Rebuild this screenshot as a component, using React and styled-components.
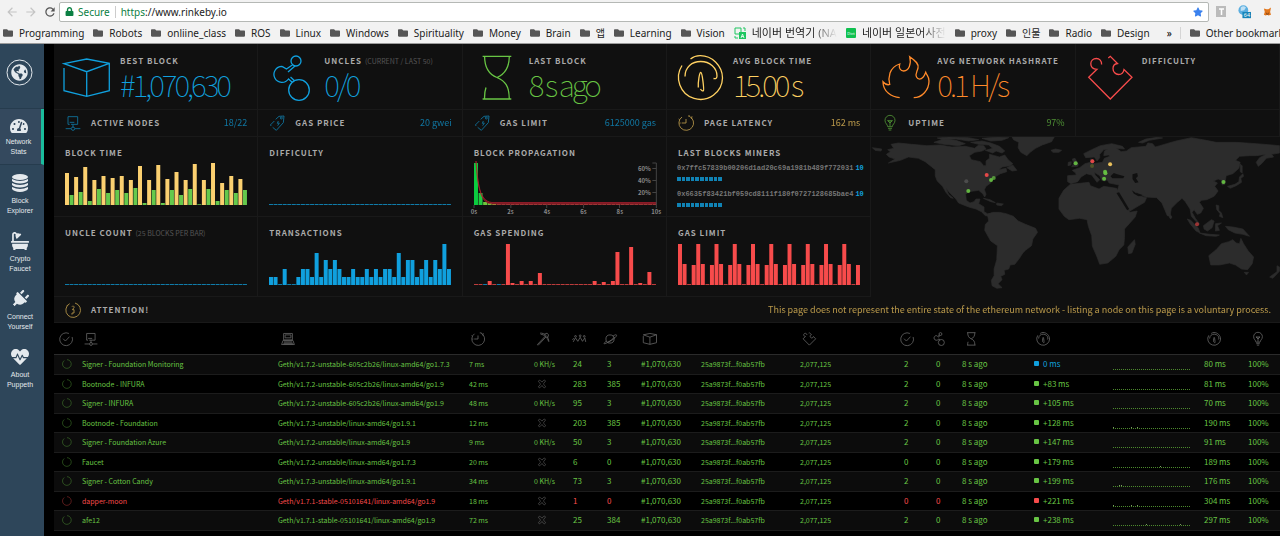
import React from 'react'
import styled, {createGlobalStyle} from 'styled-components'
import {FaBath, FaFolder, FaGlobeAmericas, FaHeartbeat, FaLock, FaPlug, FaStar, FaTachometerAlt} from 'react-icons/fa'
import {MdArrowBack, MdArrowForward, MdRefresh} from 'react-icons/md'

const c = {
	blue: '#10a0de',
	green: '#68c544',
	yellow: '#ffd162',
	orange: '#ff8a2a',
	red: '#f74b4b',
	gray: '#777',
	panel: '#101010',
	line: '#191919',
}

const GlobalStyle = createGlobalStyle`
	* { box-sizing: border-box; }
	body {
		margin: 0;
		background: #000;
		font-family: "Noto Sans CJK KR", "Noto Sans", sans-serif;
	}
	a { color: inherit; text-decoration: none; }
	button { padding: 0; border: 0; background: none; font: inherit; }
`

/* browser */

const Page = styled.div`
	display: flex;
	flex-direction: column;
	height: 100vh;
	overflow: hidden;
`

const Browser = styled.header`
	flex: none;
	background: #f2f2f2;
	border-bottom: 1px solid #9b9b9b;
	color: #1c1c1c;
	font-family: "Noto Sans", "Noto Sans CJK KR", sans-serif;
	font-size: 10px;
	line-height: 16px;
`

const Toolbar = styled.div`
	display: flex;
	align-items: center;
	height: 22px;
	padding: 1px 8px 0 2px;
`

const NavButton = styled.button`
	display: flex;
	justify-content: center;
	width: 19px;
	font-size: 14px;
	color: ${p => p.$on ? '#555' : '#c4c4c4'};
`

const Address = styled.label`
	display: flex;
	align-items: center;
	flex: 1;
	height: 20px;
	padding: 0 5px;
	border: 1px solid #b5b8b5;
	border-radius: 2px;
	background: #fff;
	color: #0b8043;
	svg { font-size: 9px; }
`

const Secure = styled.span`
	margin: 0 5px 0 4px;
	padding-right: 5px;
	border-right: 1px solid #ccc;
	line-height: 12px;
`

const UrlField = styled.input`
	flex: 1;
	min-width: 0;
	padding: 0;
	border: 0;
	outline: 0;
	background: none;
	color: #222;
	font: inherit;
`

const Extensions = styled.div`
	display: flex;
	align-items: center;
	gap: 12px;
	width: 63px;
	padding-left: 7px;
	flex: none;
`

const Bookmarks = styled.nav`
	display: flex;
	align-items: center;
	gap: 9px;
	height: 21px;
	padding-left: 3px;
	white-space: nowrap;
`

const Bookmark = styled.a`
	display: flex;
	align-items: center;
	flex: none;
	gap: 6px;
	svg { flex: none; font-size: 10px; color: #555; }
`

const Fade = styled.span`
	font-size: 11px;
	mask-image: linear-gradient(90deg, #000 70%, transparent);
`

const More = styled.button`
	margin-left: 8px;
	padding-right: 8px;
	border-right: 1px solid #d5d5d5;
	line-height: 12px;
`

/* sidebar */

const Body = styled.div`
	display: flex;
	flex: 1;
	min-height: 0;
	overflow: hidden;
`

const Sidebar = styled.nav`
	flex: none;
	width: 44px;
	background: #2e465a;
	color: #e4e9ed;
	font: 7px/10px "Liberation Sans", sans-serif;
	text-align: center;
`

const Brand = styled.a`
	display: flex;
	justify-content: center;
	height: 65px;
	padding: 15px 5px 0 0;
	border-bottom: 1px solid #263c4e;
`

const SideLink = styled.a`
	display: flex;
	flex-direction: column;
	align-items: center;
	gap: ${p => p.$active ? 2 : 4}px;
	height: ${p => p.$active ? 56 : 58}px;
	padding: ${p => p.$active ? 8 : 9}px 4px 0 0;
	border-right: ${p => p.$active ? '3px solid #1abc9c' : 0};
	border-bottom: ${p => p.$active ? '1px solid #263c4e' : 0};
	background: ${p => p.$active ? '#34495e' : 'none'};
	svg { flex: none; font-size: 18px; }
`

/* stats */

const Main = styled.main`
	flex: 1;
	min-width: 0;
	margin-left: 10px;
`

const Stats = styled.section`
	display: grid;
	grid-template-columns: repeat(6, 1fr);
	background: ${c.panel};
`

const Cell = styled.div`
	border-right: 1px solid ${c.line};
	border-bottom: 1px solid ${c.line};
	min-width: 0;
`

const BigStat = styled(Cell)`
	display: flex;
	gap: 9px;
	height: 66px;
	padding: 10px 0 0 9px;
	color: ${p => p.$color};
`

const SmallStat = styled(Cell)`
	display: flex;
	align-items: center;
	height: 27px;
	padding: 0 10px 0 11px;
	gap: 10px;
	color: ${p => p.$color};
`

const Title = styled.h2`
	margin: 0;
	color: #aaa;
	font-size: 8px;
	font-weight: 700;
	line-height: 14px;
	letter-spacing: 1px;
	text-transform: uppercase;
	white-space: nowrap;
`

const Hint = styled.small`
	color: #555;
	font-size: 7px;
	font-weight: 400;
	letter-spacing: 0;
`

const BigValue = styled.div`
	font-size: 30px;
	font-weight: 100;
	line-height: 32px;
	letter-spacing: -3px;
	white-space: nowrap;
`

const SmallValue = styled.span`
	margin-left: auto;
	font-size: 9px;
	font-weight: 400;
	line-height: 16px;
	opacity: .7;
	white-space: nowrap;
`

const ChartCell = styled(Cell)`
	height: 80px;
	padding: 9px 10px 0 11px;
`

const MapCell = styled.div`
	grid-area: 3 / 5 / 5 / 7;
	min-width: 0;
	overflow: hidden;
`

const Attention = styled.section`
	display: flex;
	align-items: center;
	gap: 10px;
	height: 26px;
	padding: 0 9px 0 11px;
	border-bottom: 1px solid ${c.line};
	background: ${c.panel};
	color: ${c.yellow};
`

const Thin = styled.svg`
	flex: none;
	width: ${p => p.$size}px;
	height: ${p => p.$size}px;
	overflow: visible;
	fill: none;
	stroke: currentColor;
	stroke-width: ${p => p.$size > 20 ? 1.3 : 2.8};
	opacity: ${p => p.$dim ? .65 : 1};
`

const Plot = styled.svg`
	display: block;
	width: 100%;
	height: ${p => p.$h}px;
	margin-top: ${p => p.$top || 0}px;
	overflow: visible;
`

const Miner = styled.div`
	margin: 4px 0 9px -1px;
	color: #777;
	font: bold 7px/9px "Liberation Mono", monospace;
	white-space: nowrap;
	b { margin-left: 2px; color: ${c.blue}; }
`

const Blocks = styled.div`
	display: flex;
	gap: 1px;
	width: 45px;
	margin-top: 4px;
	i { flex: 1; height: 4px; background: ${c.blue}; opacity: .8; }
`

/* nodes table */

const Nodes = styled.table`
	width: 100%;
	table-layout: fixed;
	border-collapse: collapse;
	color: ${c.green};
	font-size: 8px;
	line-height: 14px;
	text-align: left;
	white-space: nowrap;
`

const HeadCell = styled.th`
	height: 31px;
	padding: 2px 0 0 ${p => p.$pad}px;
	border-bottom: 1px solid #2b2b2b;
	color: #999;
	svg { display: block; }
`

const Row = styled.tr`
	height: 20px;
	background: #0c0c0c;
	&:nth-child(even) { height: 19px; background: #000; }
	td {
		padding: 0 0 0 4px;
		border-bottom: 1px solid #1c1c1c;
		color: ${p => p.$down ? c.red : c.green};
	}
	td svg { display: block; }
`

const State = styled.td`
	&&& { padding-left: 8px; }
	opacity: .6;
`

const Data = styled.td`
	&&& { color: ${p => p.$color || c.green}; }
	font-size: ${p => p.$small ? 7 : 8}px;
`

const Label = styled.td`
	font-size: 7px;
`

const Off = styled.span`
	display: block;
	padding-left: 3px;
`

const Square = styled.i`
	display: inline-block;
	width: 5px;
	height: 5px;
	margin-right: 4px;
	border-radius: 1px;
	background: ${p => p.$color};
	vertical-align: 1px;
`

const paths = {
	block: 'M1 14V36.7L23.7 42.3L46.3 36.7V9.3L23.7 5L1 9.7L23.7 17.7L46.3 9.3M23.7 17.7V42.3',
	uncles: 'M34 7A5 5 0 1 0 24 7A5 5 0 1 0 34 7M42.3 36A10.3 10.3 0 1 0 21.7 36A10.3 10.3 0 1 0 42.3 36M15 12.4A8 8 0 1 0 21.5 25L25.5 28.5M23.5 23L27.500 26.800M15 12.4L19.5 15L26 10.5M21 18L28 12',
	hourglass: 'M10.6 2.3H39.3M10.6 45H39.3M12.6 2.3C12.6 14 17 20.5 25 23.5C33 27 37.3 32 37.3 45M37.3 2.3C37.3 14 32 20.5 25 23.5M12.6 45C12.4 40 12.8 37 14 33.5',
	gauge: 'M6 11.5A22 22 0 1 0 46.5 24C46.5 12 36 1.5 24 1.7C20.5 1.8 17 3 14.5 5M9 22.5C9 13 16 7.5 24.7 7.5C34 7.5 41 14 41 22C41 24 40 25 37.5 24.5M22.3 33.5C22 27 23.5 18.5 24.7 18.5C26.5 18.5 28 36 27.5 36.5C26.7 37.5 25.5 36.5 24.5 35',
	flame: 'M19.7 43.7C12 43 3 38 3 27.7C5 30 7 31.5 9.7 30.5C8.5 26 9 22 10 19C12 13.5 15 11.5 19.7 10C18.5 14 20.5 17 23.7 17C29 16.5 31.5 10 29.7 2.7C36 7 39 10 38 14C37 18 35 20 36.5 23C38 26 41 25.5 43 23.3C44.5 21.5 45 20 45.7 18.3C47 22 49 22 49 27C49 36 42 43.7 33.7 43.7',
	puzzle: 'M23.3 4L25.3 2.3L32.5 9.5C29 10 28 12 28 14.5C28 18 30.5 20.5 33.5 20.5C36.5 20.5 38.5 18.5 39 15.5L47 23.3L25.3 45L3.7 23.3L12 15.3C8 15 5.8 12.5 5.8 9.7C5.8 6.5 8.3 4.5 11.3 4.5C14.5 4.5 16.8 7 16.6 10.5',
	node: 'M14 28H9V5H38V28H18M24 28V38M2 41H18M30 41H46M29 41A5 5 0 1 0 19 41A5 5 0 1 0 29 41M14 22H28',
	tag: 'M11 37L22 46L43 23L45 3L30 4L20 13M16 18L4 30L7 33M40 9A3 3 0 1 0 34 9A3 3 0 1 0 40 9M28 18L25 25L31 24L26 32',
	clock: 'M12 6A22 22 0 1 0 34 4M24 12V24H11M42 4L40 12M36 3H30M5 14L2 12M4 24H8',
	bulb: 'M17 35C17 28 9 26 9 16A15 15 0 0 1 39 16C39 26 31 28 31 35ZM18 40H30M20 45H28M24 34V22L17 17M24 22L31 17M17 17H31L24 24Z',
	info: 'M14 5A22 22 0 1 0 30 3M6 11L9 8M21 14C23 10 28 12 27 17L22 23H27V33H21V38',
	check: 'M34 5A22 22 0 1 0 45 17M14 23L22 31L36 16',
	laptop: 'M9 27V5H39V27ZM14 10H34V20H14ZM7 29H41L46 43H2ZM10 34H38M9 38H40M8 41H42',
	pick: 'M4 44L32 14M7 46L34 17M14 4C28 2 44 16 44 34M16 8C27 8 38 18 42 30M28 8L38 4L43 10L40 20',
	peers: 'M4 34L12 20L20 32L28 18L36 32L44 20L47 34M15 15A3 3 0 1 0 9 15A3 3 0 1 0 15 15M31 13A3 3 0 1 0 25 13A3 3 0 1 0 31 13M45 15A3 3 0 1 0 39 15A3 3 0 1 0 45 15M1 26L7 22',
	planet: 'M38 24A14 14 0 1 0 10 24A14 14 0 1 0 38 24M12 31C-2 41 2 43 16 36C32 29 50 14 46 10C43 8 38 12 34 14M14 36C23 32 34 24 40 17',
	circle: 'M24 3A21 21 0 1 1 11 7',
	off: 'M24 15L31 7C35 4 40 6 41 10L33 20C30 24 33 27 41 36C40 43 34 43 31 40L24 31L16 40C12 43 8 42 7 37L16 26C17 24 16 22 7 12C7 6 13 5 17 8Z',
}

const Icon = ({name, size = 14, dim, label}) => (
	<Thin viewBox='0 0 48 48' $size={size} $dim={dim} role='img' aria-label={label || name}>
		<path d={paths[name]} />
	</Thin>
)

const bigStats = [
	{icon: 'block', label: 'Best Block', value: '#1,070,630', color: c.blue},
	{icon: 'uncles', label: 'Uncles', hint: '(Current / Last 50)', value: '0/0', color: c.blue},
	{icon: 'hourglass', label: 'Last Block', value: '8 s ago', color: c.green},
	{icon: 'gauge', label: 'Avg Block Time', value: '15.00 s', color: c.yellow},
	{icon: 'flame', label: 'Avg Network Hashrate', value: '0.1 H/s', color: c.orange},
	{icon: 'puzzle', label: 'Difficulty', value: '', color: c.red},
]

const smallStats = [
	{icon: 'node', label: 'Active Nodes', value: '18/22', color: c.blue},
	{icon: 'tag', label: 'Gas Price', value: '20 gwei', color: c.blue},
	{icon: 'tag', label: 'Gas Limit', value: '6125000 gas', color: c.blue},
	{icon: 'clock', label: 'Page Latency', value: '162 ms', color: c.yellow},
	{icon: 'bulb', label: 'Uptime', value: '97%', color: c.green},
]

const blockTime = [32, 10, 28, 13, 38, 4, 25, 16, 29, 12, 27, 15, 29, 12, 25, 17, 39, 2, 25, 15, 40, 2, 26, 15, 33, 10, 25, 16, 41, 1, 25, 16, 42, 4, 22, 15, 29, 12, 26, 15]
const flat = Array(40).fill(1)
const transactions = [8, 8, 1, 16, 1, 1, 8, 16, 16, 8, 32, 8, 25, 16, 25, 16, 8, 8, 16, 8, 8, 16, 8, 16, 8, 16, 16, 8, 32, 8, 25, 25, 8, 16, 25, 8, 25, 16, 41, 16]
const gasSpending = [1, 1, 1, 4, 1, 1, 1, 41, 2, 1, 4, 1, 4, 1, 12, 1, 1, 1, 1, 1, 1, 1, 1, 1, 1, 1, 4, 1, 3, 1, 4, 33, 1, 1, 38, 1, 2, 1, 13, 1]
const gasLimit = flat.map((_, i) => [41, 21, 1, 20][i % 4])

const Bars = ({data, color}) => (
	<Plot $h={42} $top={3} viewBox='0 0 183 42' preserveAspectRatio='none'>
		{data.map((h, i) => (
			<rect
				key={i}
				x={i * 4.58}
				y={42 - h}
				width='4'
				height={h}
				fill={color(i)}
				opacity={h === 1 ? .75 : 1}
			/>
		))}
	</Plot>
)

const BarCell = ({title, hint, ...props}) => (
	<ChartCell>
		<Title>{title} {hint && <Hint>{hint}</Hint>}</Title>
		<Bars {...props} />
	</ChartCell>
)

const AxisText = styled.text`
	fill: #888;
	font: 700 6px "Noto Sans CJK KR", sans-serif;
	text-anchor: middle;
`

const Propagation = () => (
	<Plot $h={42} $top={3} viewBox='0 0 183 42' preserveAspectRatio='none'>
		<rect width='4' height='42' fill='#0bcc3f' />
		<rect x='4.6' y='30' width='4' height='12' fill='#1fc940' />
		<rect x='9.2' y='39' width='4' height='3' fill='#6cc83c' />
		<rect x='13.7' y='40' width='4' height='2' fill='#6cc83c' />
		<rect x='18.3' y='41' width='4' height='1' fill='#8fb53a' />
		<path d='M23 41.5H183' stroke='#94433a' strokeDasharray='4 .6' />
		<path d='M2 -2C4 20 5 38 18 39.5H183V41H18C8 40 4 30 2 -2Z' fill='#a01c28' fillOpacity='.6' stroke='#b02030' strokeWidth='.7' />
		<path d='M0 42V45M37 42V45M73 42V45M110 42V45M146 42V45M179 0H183V45M179 5.5H183M179 17.5H183M179 29.5H183' fill='none' stroke='#444' />
		{['60%', '40%', '20%'].map((t, i) => <AxisText key={t} x='171' y={8 + i * 12}>{t}</AxisText>)}
		{['0s', '2s', '4s', '6s', '8s', '10s'].map((t, i) => <AxisText key={t} x={i * 36.6} y='51'>{t}</AxisText>)}
	</Plot>
)

const land = [
	'M68 46L90 42L130 46L175 50L215 48L250 54L290 52L318 58L330 48L345 50L352 60L340 66L318 70L302 80L308 92L335 98L345 110L352 110L352 96L362 88L362 76L378 80L392 84L408 78L418 92L432 104L424 110L400 114L390 122L412 118L414 128L395 134L382 142L370 150L366 162L352 172L347 182L352 196L348 204L342 194L330 184L300 188L291 196L293 214L304 222L316 218L322 210L334 210L330 224L346 234L346 248L356 254L372 254L366 262L350 260L338 248L322 240L300 234L270 222L262 210L246 194L232 178L240 196L254 208L246 206L232 190L222 172L206 156L200 140L200 122L190 114L170 98L150 88L120 84L96 94L60 102L80 90L62 84L54 76L66 68L58 62L76 58Z',
	'M356 256L372 250L392 250L412 254L434 262L448 276L470 286L500 298L506 310L492 330L488 350L470 364L462 372L452 388L438 406L424 408L420 420L406 424L408 436L396 442L400 452L388 464L400 476L384 478L370 470L368 454L376 440L376 420L384 392L386 350L366 336L348 304L350 286L360 276Z',
	'M430 24L556 24L548 38L520 48L500 58L484 70L474 80L456 70L448 56L450 40L434 32Z',
	'M546 64L560 60L578 64L570 70L552 70Z',
	'M196 40L226 30L262 34L290 44L270 50L226 46Z',
	'M206 27L240 24L300 26L330 32L300 36L262 30L222 32Z',
	'M306 40L340 36L366 42L392 52L408 66L400 72L382 66L372 72L350 64L372 58L360 48L330 46Z',
	'M340 28L390 24L420 26L400 34L366 36Z',
	'M12 56L40 60L38 66L20 64Z',
	'M414 116L432 108L444 124L430 126Z',
	'M344 208L364 212L380 221L366 218Z',
	'M384 222L404 225L398 230L384 228Z',
	'M610 90L618 88L628 106L626 112L608 113L614 104Z',
	'M598 100L607 98L606 108L597 110Z',
	'M596 140L622 138L620 132L610 124L632 116L648 104L664 100L664 90L672 92L672 104L700 100L706 88L722 82L718 78L704 80L706 66L716 60L704 62L692 76L692 86L684 96L676 84L650 86L644 74L668 62L694 50L728 44L760 52L766 60L742 58L756 68L772 66L786 56L830 52L836 42L850 44L858 54L872 50L892 44L920 36L966 26L1010 34L1040 40L1100 40L1160 44L1230 50L1230 72L1206 76L1212 84L1190 88L1176 104L1166 112L1160 100L1170 86L1190 76L1160 80L1140 80L1110 82L1098 94L1112 100L1108 118L1090 134L1070 140L1066 166L1058 168L1056 154L1046 150L1032 156L1044 162L1036 172L1046 186L1034 202L1012 212L996 214L990 220L1002 238L994 252L984 256L974 242L968 250L978 268L990 284L984 282L966 262L962 240L948 218L938 208L924 220L906 238L902 262L894 260L878 222L862 206L830 204L800 190L806 200L832 206L826 220L782 246L770 234L744 194L746 180L750 168L720 162L714 152L708 156L698 154L692 140L676 130L678 138L692 152L684 160L668 138L652 134L636 144L626 158L606 164L596 158Z',
	'M604 166L660 160L664 170L690 180L704 172L742 178L752 200L776 240L782 250L804 246L798 264L766 300L766 326L764 348L750 362L740 382L716 402L692 406L684 384L670 352L668 320L658 292L654 272L632 268L600 272L586 262L570 240L570 208L584 184Z',
	'M796 332L798 346L788 372L778 374L776 354Z',
	'M808 40L830 30L864 25L880 27L840 34L820 42Z',
	'M1018 380L1040 362L1056 344L1078 338L1090 332L1100 342L1110 344L1114 328L1122 344L1136 366L1152 384L1148 404L1134 422L1116 420L1098 408L1080 402L1050 408L1024 408Z',
	'M1124 430L1137 430L1131 438Z',
	'M1222 410L1230 414V426L1210 448L1200 444L1222 428Z',
	'M1074 172L1096 166L1108 158L1110 144L1120 134L1122 142L1114 148L1116 160L1100 170L1082 178Z',
	'M1112 106L1118 110L1118 132L1112 128Z',
	'M1040 228L1048 230L1048 244L1056 252L1060 266L1050 262L1052 254L1042 242Z',
	'M1002 290L1026 272L1034 276L1028 296L1014 306L1004 300Z',
	'M954 270L964 274L986 296L992 312L980 306L962 284Z',
	'M990 312L1022 316L1050 318L1040 322L1010 320Z',
	'M1038 284L1056 282L1044 290L1050 304L1038 306Z',
	'M1068 292L1090 294L1120 300L1140 322L1120 316L1096 312L1076 302Z',
	'M902 256L908 264L904 270L900 264Z',
]

const water = [
	'M742 192L750 190L780 240L774 244Z',
	'M724 142L734 132L744 136L766 142L762 148L730 148Z',
	'M790 136L804 132L806 142L800 148L808 160L798 162L790 150Z',
	'M788 184L800 192L820 198L808 202L794 194Z',
]

const pins = [
	[293, 157, '#555', .8], [299, 186, c.green], [354, 138, c.red], [375, 147, c.green, .7],
	[367, 153, c.green], [620, 103, c.green], [669, 111, '#5e6428', .7], [670, 97, c.red],
	[723, 106, c.yellow], [708, 128, c.green], [709, 133, c.green], [705, 149, c.green],
	[1062, 159, c.green], [983, 286, c.red, .6],
]

const WorldMap = () => (
	<Plot $h={159} viewBox='8 24 1222 477' preserveAspectRatio='none' role='img' aria-label='Node locations'>
		{land.map(d => <path key={d} d={d} fill='#2c2c2c' stroke='#2c2c2c' strokeWidth='2' strokeLinejoin='round' />)}
		{water.map(d => <path key={d} d={d} fill={c.panel} />)}
		{pins.map(([x, y, fill, o = .9]) => <circle key={x} cx={x} cy={y} r='6' fill={fill} opacity={o} />)}
	</Plot>
)

const miners = [
	'0x7ffc57839b00206d1ad20c69a1981b489f772031',
	'0x6635f83421bf059cd8111f180f0727128685bae4',
]

// icon, column width, icon inset
const columns = [
	['check', 24, 5], ['node', 196, 6], ['laptop', 191, 7], ['clock', 65, 6], ['pick', 39, 6],
	['peers', 34, 3], ['planet', 34, 0], ['block', 60, 6], [null, 99, 0], ['puzzle', 104, 6],
	['check', 32, 0], ['uncles', 26, 0], ['hourglass', 72, 6], ['gauge', 79, 6], [null, 91, 0],
	['gauge', 44, 7], ['bulb', 36, 7],
]

const fix = '-605c2b26'
const nodes = [
	['Signer - Foundation Monitoring', `Geth/v1.7.2-unstable${fix}/linux-amd64/go1.7.3`, 7, true, 24, 3, 2, '0 ms', 80, []],
	['Bootnode - INFURA', `Geth/v1.7.2-unstable${fix}/linux-amd64/go1.9`, 42, false, 283, 385, 2, '+83 ms', 81, []],
	['Signer - INFURA', `Geth/v1.7.2-unstable${fix}/linux-amd64/go1.9`, 48, true, 95, 3, 2, '+105 ms', 70, []],
	['Bootnode - Foundation', 'Geth/v1.7.3-unstable/linux-amd64/go1.9.1', 12, false, 203, 385, 2, '+128 ms', 190, [0, 18, 24]],
	['Signer - Foundation Azure', 'Geth/v1.7.2-unstable/linux-amd64/go1.9', 9, true, 50, 3, 2, '+147 ms', 91, []],
	['Faucet', 'Geth/v1.7.2-unstable/linux-amd64/go1.7.3', 20, false, 6, 0, 0, '+179 ms', 189, [47]],
	['Signer - Cotton Candy', 'Geth/v1.7.3-unstable/linux-amd64/go1.9.1', 34, true, 73, 3, 2, '+199 ms', 176, [6, 8]],
	['dapper-moon', 'Geth/v1.7.1-stable-05101641/linux-amd64/go1.9', 18, false, 1, 0, 0, '+221 ms', 304, [0, 18, 24], true],
	['afe12', 'Geth/v1.7.1-stable-05101641/linux-amd64/go1.9', 72, false, 25, 384, 2, '+238 ms', 297, [33, 67]],
]

const NodeRow = ({node}) => {
	const [name, type, latency, mining, peers, pending, txs, delay, avg, peaks, down] = node
	const state = down ? c.red : c.green
	const first = delay === '0 ms'
	return (
		<Row $down={down}>
			<State><Icon name='circle' size={10} label='state' /></State>
			<Label>{name}</Label>
			<Label>{type}</Label>
			<Data $small>{latency} ms</Data>
			<Data $small $color={mining ? c.green : '#666'}>
				{mining ? '0 KH/s' : <Off><Icon name='off' size={10} label='not mining' /></Off>}
			</Data>
			<Data $color={state}>{peers}</Data>
			<Data $color={state}>{pending}</Data>
			<Data>#1,070,630</Data>
			<Data $small>25a9873f...f0ab57fb</Data>
			<Data $small>2,077,125</Data>
			<Data $color={state}>{txs}</Data>
			<Data $color={state}>0</Data>
			<Data>8 s ago</Data>
			<Data $color={first ? c.blue : c.green}>
				<Square $color={first ? c.blue : state} />{delay}
			</Data>
			<td>
				<svg width='78' height='12' aria-hidden='true'>
					<path d='M0 11.5H78' stroke='#4c8a2c' strokeDasharray='1 1' />
					{peaks.map(x => <rect key={x} x={x} y='10' width='1' height='1' fill='#7a9a60' />)}
				</svg>
			</td>
			<Data>{avg} ms</Data>
			<Data>100%</Data>
		</Row>
	)
}

const Folder = ({children}) => <Bookmark href='#'><FaFolder />{children}</Bookmark>

const Database = () => (
	<svg width='18' height='18' viewBox='0 0 18 18' fill='currentColor'>
		<ellipse cx='9' cy='3' rx='8' ry='3' />
		<path d='M1 5Q9 9 17 5V7Q15 9 9 9.500Q3 9 1 7ZM1 9Q9 13 17 9V11Q15 13 9 13.500Q3 13 1 11ZM1 13Q9 17 17 13V15Q15 17.500 9 18Q3 17.500 1 15Z' />
	</svg>
)

const Chrome = () => (
	<Browser>
		<Toolbar>
			<NavButton aria-label='Back'><MdArrowBack /></NavButton>
			<NavButton aria-label='Forward'><MdArrowForward /></NavButton>
			<NavButton $on aria-label='Reload'><MdRefresh /></NavButton>
			<Address>
				<FaLock />
				<Secure>Secure</Secure>
				https
				<UrlField aria-label='Address' defaultValue='://www.rinkeby.io' />
				<FaStar color='#3b82ee' style={{fontSize: 10}} />
			</Address>
			<Extensions>
				<svg width='11' height='11'>
					<rect width='11' height='11' fill='#bbb' />
					<path d='M3 3H8M5.500 3V9' stroke='#fff' strokeWidth='1.500' />
				</svg>
				<svg width='15' height='15' viewBox='0 0 15 15'>
					<circle cx='6' cy='6' r='5.500' fill='#5aaee0' />
					<path d='M3 3Q6 0 9 3L7 6L3 7Z' fill='#bfe0f4' />
					<rect x='5' y='8' width='10' height='7' fill='#1684b8' />
					<text x='10' y='14' fontSize='6' fill='#fff' textAnchor='middle'>64</text>
				</svg>
				<svg width='10' height='10' viewBox='0 0 10 10'>
					<path d='M1 1L4 2H6L9 0L8 5L9 8L6 9L5 8L3 9L1 8L2 5Z' fill='#e2761b' />
					<path d='M3 5L5 7L7 5L6 8H4Z' fill='#8a4a1c' />
				</svg>
			</Extensions>
		</Toolbar>
		<Bookmarks>
			{['Programming', 'Robots', 'onliine_class', 'ROS', 'Linux', 'Windows', 'Spirituality', 'Money', 'Brain', '앱', 'Learning', 'Vision'].map(t => (
				<Folder key={t}>{t}</Folder>
			))}
			<Bookmark href='#'>
				<svg width='12' height='12'>
					<path d='M1 1H7V7H1ZM9 1H11V4M1 9V11H4' fill='none' stroke='#1ec660' />
					<rect x='5' y='5' width='7' height='7' fill='#1ec660' />
					<path d='M7 11L8.500 7L10 11M7.500 9.500H9.500' fill='none' stroke='#fff' strokeWidth='.8' />
				</svg>
				<Fade>네이버 번역기 (NA</Fade>
			</Bookmark>
			<Bookmark href='#'>
				<svg width='10' height='10'>
					<rect width='10' height='10' rx='1' fill='#0fc04f' />
					<text x='5' y='7' fontSize='4' fill='#fff' textAnchor='middle'>Dict</text>
				</svg>
				<Fade>네이버 일본어사전</Fade>
			</Bookmark>
			{['proxy', '인물', 'Radio', 'Design'].map(t => <Folder key={t}>{t}</Folder>)}
			<More aria-label='More bookmarks'>»</More>
			<Folder>Other bookmarks</Folder>
		</Bookmarks>
	</Browser>
)

const App = () => (
	<Page>
		<GlobalStyle />
		<Chrome />
		<Body>
			<Sidebar>
				<Brand href='#' aria-label='Rinkeby'>
					<svg width='27' height='27' viewBox='0 0 27 27'>
						<circle cx='13.500' cy='13.500' r='12.500' fill='none' stroke='currentColor' />
						<FaGlobeAmericas x='5' y='5' size='17' />
					</svg>
				</Brand>
				<SideLink href='#' $active><FaTachometerAlt /><span>Network<br />Stats</span></SideLink>
				<SideLink href='#'><Database /><span>Block<br />Explorer</span></SideLink>
				<SideLink href='#'><FaBath /><span>Crypto<br />Faucet</span></SideLink>
				<SideLink href='#'><FaPlug transform='rotate(45)' /><span>Connect<br />Yourself</span></SideLink>
				<SideLink href='#'><FaHeartbeat /><span>About<br />Puppeth</span></SideLink>
			</Sidebar>
			<Main>
				<Stats>
					{bigStats.map(({icon, label, hint, value, color}) => (
						<BigStat key={label} $color={color}>
							<Icon name={icon} size={48} />
							<div>
								<Title>{label} {hint && <Hint>{hint}</Hint>}</Title>
								<BigValue>{value}</BigValue>
							</div>
						</BigStat>
					))}
					{smallStats.map(({icon, label, value, color}) => (
						<SmallStat key={label} $color={color}>
							<Icon name={icon} size={16} dim />
							<Title>{label}</Title>
							<SmallValue>{value}</SmallValue>
						</SmallStat>
					))}
					<SmallStat />
					<BarCell title='Block Time' data={blockTime} color={i => i % 2 ? '#65c94c' : '#fbd070'} />
					<BarCell title='Difficulty' data={flat} color={() => c.blue} />
					<ChartCell>
						<Title>Block Propagation</Title>
						<Propagation />
					</ChartCell>
					<ChartCell>
						<Title>Last Blocks Miners</Title>
						{miners.map(m => (
							<Miner key={m}>
								{m}<b>10</b>
								<Blocks>{flat.slice(0, 10).map((_, i) => <i key={i} />)}</Blocks>
							</Miner>
						))}
					</ChartCell>
					<MapCell><WorldMap /></MapCell>
					<BarCell title='Uncle Count' hint='(25 blocks per bar)' data={flat} color={() => c.blue} />
					<BarCell title='Transactions' data={transactions} color={() => c.blue} />
					<BarCell title='Gas Spending' data={gasSpending} color={i => i === 2 || i === 5 ? c.blue : c.red} />
					<BarCell title='Gas Limit' data={gasLimit} color={() => c.red} />
				</Stats>
				<Attention>
					<Icon name='info' size={16} dim />
					<Title>Attention!</Title>
					<SmallValue>This page does not represent the entire state of the ethereum network - listing a node on this page is a voluntary process.</SmallValue>
				</Attention>
				<Nodes>
					<colgroup>
						{columns.map(([, w], i) => <col key={i} style={{width: w}} />)}
					</colgroup>
					<thead>
						<tr>
							{columns.map(([icon, , pad], i) => (
								<HeadCell key={i} $pad={pad} scope='col'>{icon && <Icon name={icon} size={14} dim />}</HeadCell>
							))}
						</tr>
					</thead>
					<tbody>
						{nodes.map(n => <NodeRow key={n[0]} node={n} />)}
					</tbody>
				</Nodes>
			</Main>
		</Body>
	</Page>
)

export default App
